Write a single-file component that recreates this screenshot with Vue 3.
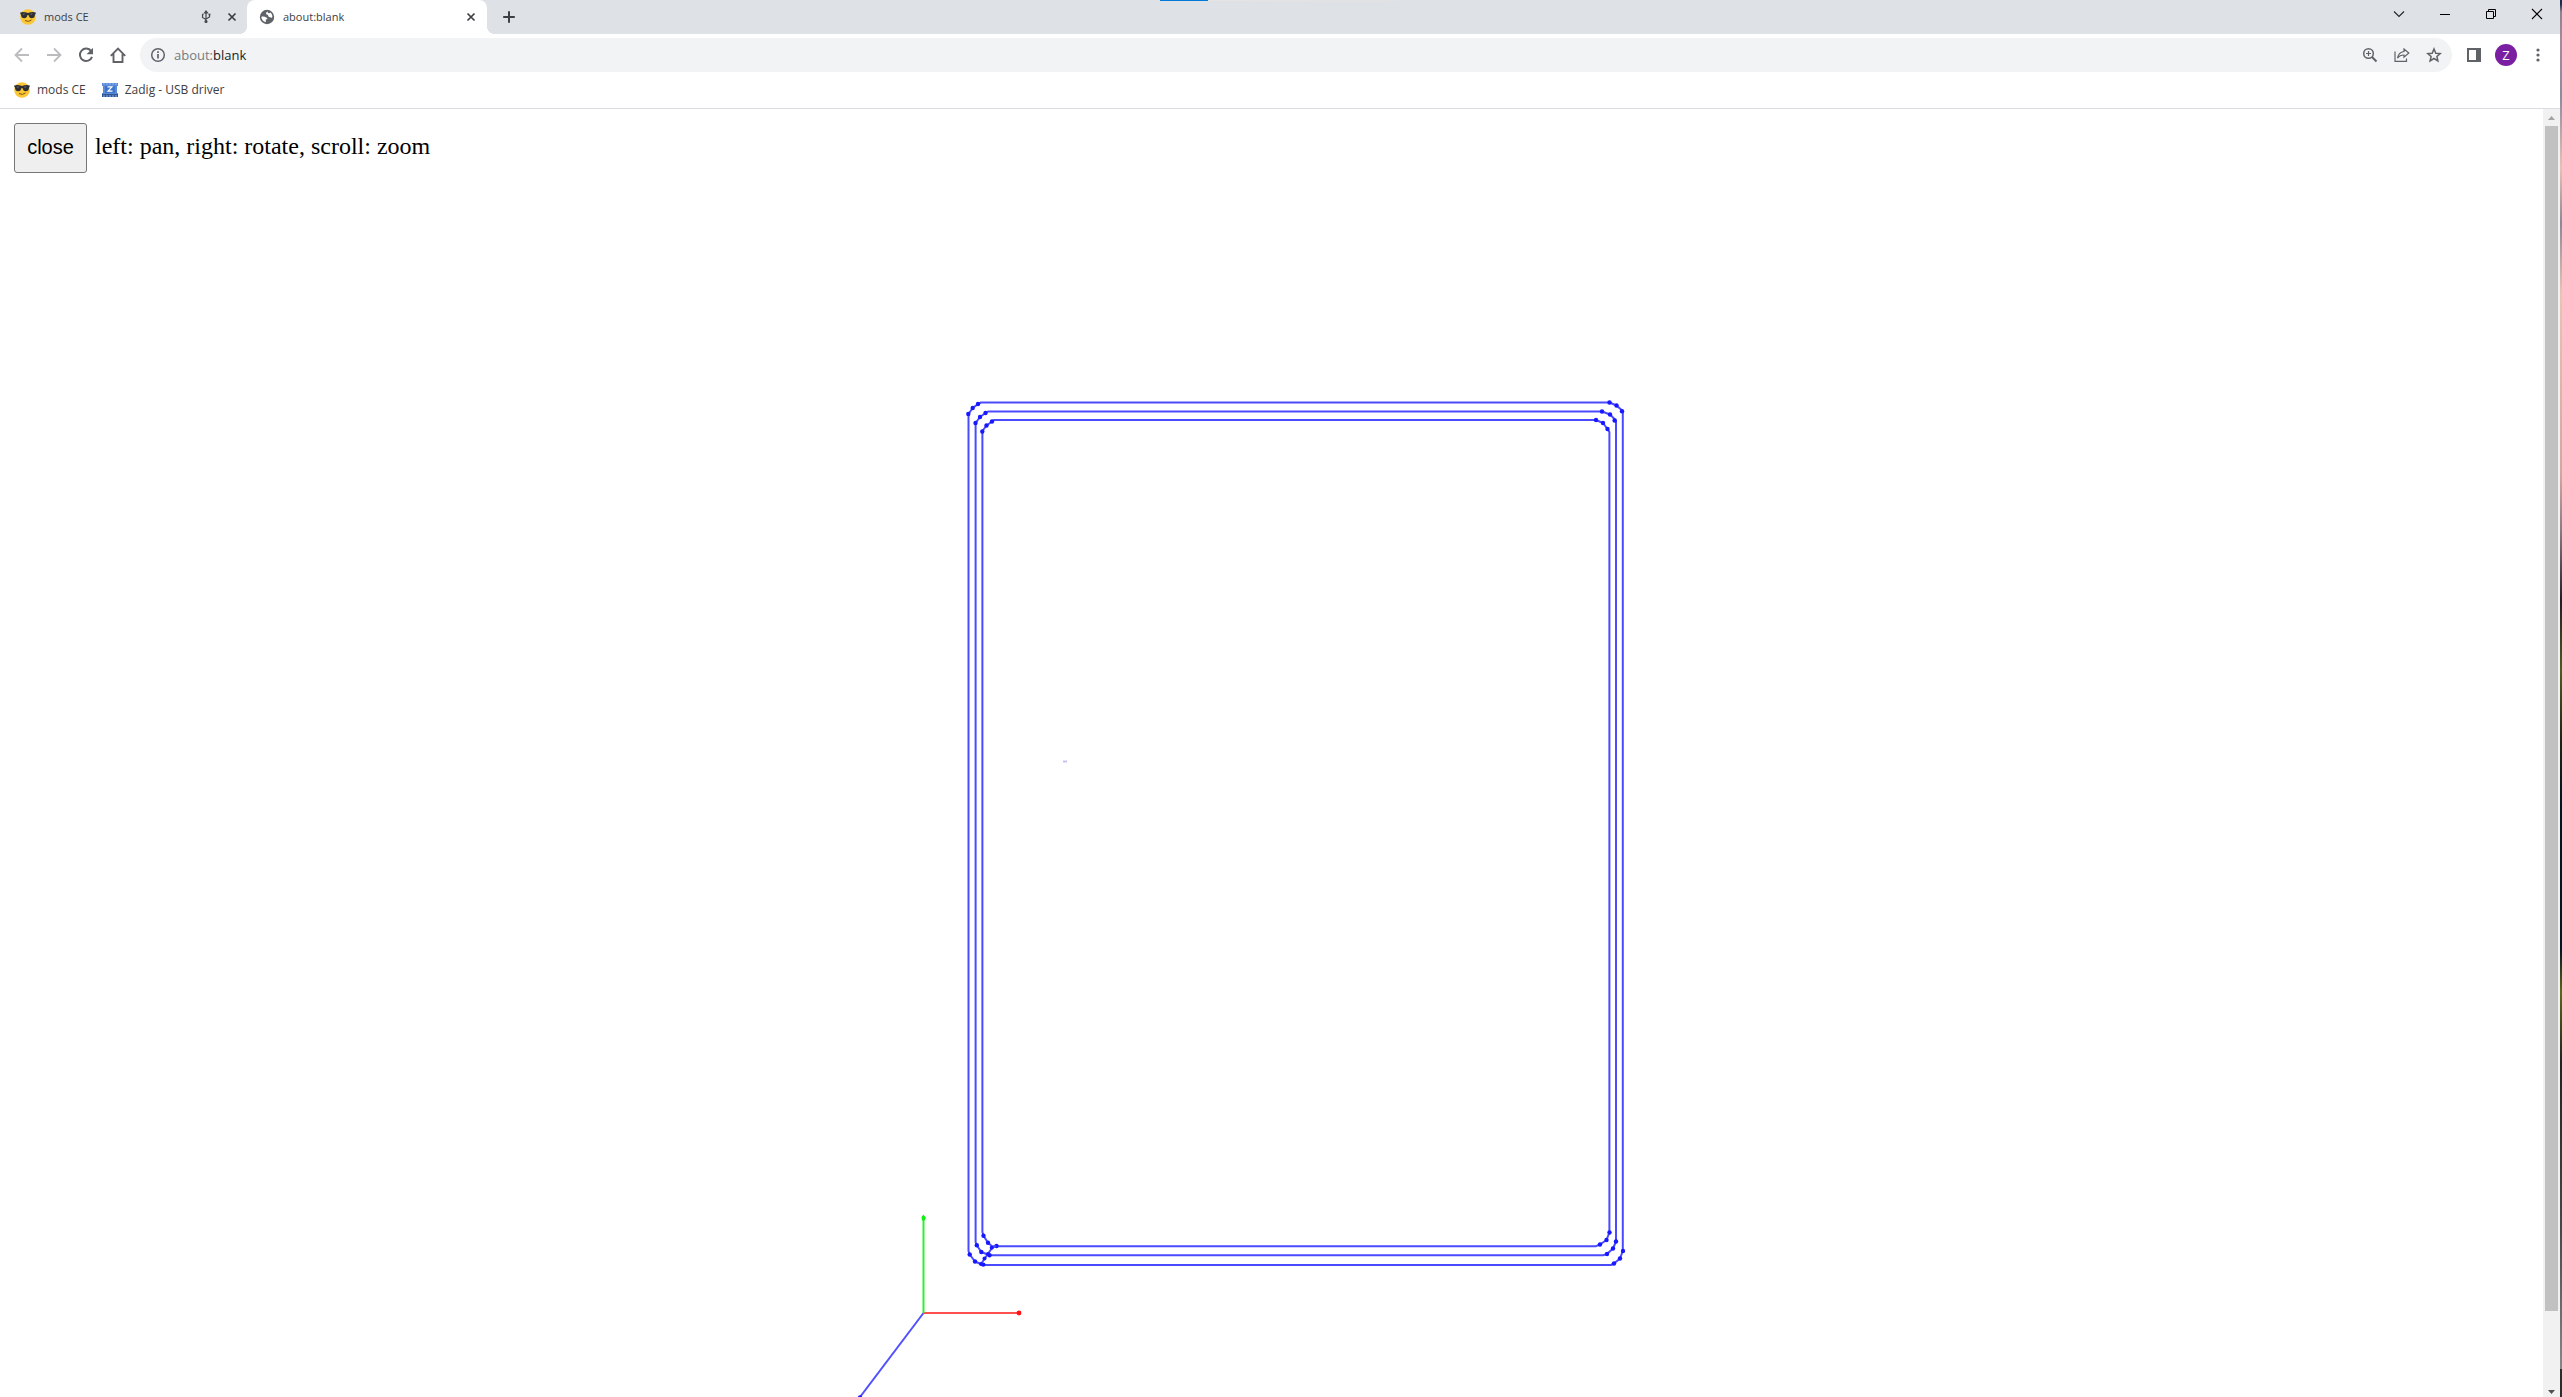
<script setup>
const loops = [
  {
    line: 'M968.5 414V1251L969.7 1254.5L975 1261.5L983 1265H1611L1614 1263.5L1620 1258.5L1622.8 1251V411L1616.5 405.5L1609.5 402.5H981L978 404L972.7 408Z',
    nodes: [[968.3, 414], [972.7, 408], [978, 404], [1609.5, 402.5], [1616.5, 405.5], [1622, 411.3], [969.7, 1254.5], [975, 1261.5], [983.3, 1264.6], [1623, 1251], [1620, 1258.5], [1614, 1263.5]],
  },
  {
    line: 'M975.6 423V1242L976.8 1245.3L981.3 1252L989.5 1255.2H1603L1607 1254L1613 1248.5L1616 1241.5V420.5L1610 414.5L1602 411.5H988L985.5 413L980 417Z',
    nodes: [[975.5, 423], [980, 417], [985.5, 413], [1602, 411.5], [1610, 414.5], [1614.6, 420.5], [976.8, 1245.3], [981.3, 1252], [989.5, 1255.2], [1616, 1241.5], [1613, 1248.5], [1607, 1254]],
  },
  {
    line: 'M982.4 431V1232L983.5 1235.7L988 1242.7L992 1246.2H1596L1600 1244.5L1606.5 1240L1609.4 1232.5V432L1607.5 429L1603 423L1596 420H994L992 421.5L986.5 425.5Z',
    nodes: [[982.3, 431.5], [986.5, 425.5], [992, 421.5], [1596, 420], [1603, 423], [1607.5, 429], [983.5, 1235.7], [988, 1242.7], [996.5, 1246], [1609.5, 1232.5], [1606.5, 1240], [1600, 1244.5]],
  },
]
const linkNodes = [[981, 1264], [984.5, 1258.5], [988, 1254], [991.7, 1247.7]]
const tabs = [
  { title: 'mods CE', icon: 'shades', usb: true, active: false },
  { title: 'about:blank', icon: 'globe', usb: false, active: true },
]
const bookmarks = [
  { title: 'mods CE', icon: 'shades' },
  { title: 'Zadig - USB driver', icon: 'zadig' },
]
</script>

<template>
  <div class="screen">
    <div class="browser">
      <header class="tabstrip">
        <div class="tabs">
          <div v-for="t in tabs" :key="t.title" class="tab" :class="{ active: t.active }">
            <svg v-if="t.icon === 'shades'" class="i16" viewBox="0 0 16 16"><circle cx="8" cy="8" r="7.8" fill="#fcc735" /><path d="M.3 3.4Q4 2.6 8 4Q12 2.6 15.7 3.4V5L15 5.4C15 8 13.5 9.2 11.7 9.2C9.6 9.2 8.9 7.8 8.5 5.9H7.5C7.1 7.8 6.4 9.2 4.3 9.2C2.5 9.2 1 8 1 5.4L.3 5Z" fill="#2f2f33" /><path d="M2.5 4.8L5.5 4.6L3.5 6Z M10 4.8L13 4.6L11 6Z" fill="#6b6f78" /><path d="M5 11.5Q8.5 13.5 11.5 11" fill="none" stroke="#7a5218" stroke-width="1" /></svg>
            <svg v-else class="i16" viewBox="0 0 16 16"><circle cx="8" cy="8" r="7.2" fill="#5f6368" /><path d="M2.3 7.8C4.4 7.4 6 7.4 7 8.4C8.4 8.4 8.6 9.4 8 10.2L6.8 10.6V13.2C4.2 12.6 2.3 10.4 2.3 7.8Z" fill="#fff" /><path d="M8.8 2.6C7.6 3 6.6 4.2 7.2 5.2C8.2 5.8 9.2 5.6 9.3 7C9.6 8.2 10.8 8 11.8 8.4C12.6 8.8 13 8.8 13.4 8C13.4 6 12.6 4.4 11.2 3.6C10.6 4.6 9.4 4.4 8.8 3.8Z" fill="#fff" /></svg>
            <span class="title">{{ t.title }}</span>
            <svg v-if="t.usb" class="usb" viewBox="0 0 12 14" fill="none" stroke="#45484c" stroke-width="1.2"><path d="M6 2V12M2.5 5V7.5L6 9.5M9.5 5V7L6 9" /><path d="M4.5 3L6 1L7.5 3Z" fill="#45484c" /><circle cx="6" cy="11.5" r="1" fill="#45484c" /><path d="M2 4.5H3.5M8.5 4.5H10.5" stroke-width="1.5" /></svg>
            <button class="plain close" aria-label="Close tab"><svg viewBox="0 0 16 16" class="i16"><path d="M4.5 4.5L11.5 11.5M11.5 4.5L4.5 11.5" stroke="#3c4043" stroke-width="1.7" /></svg></button>
          </div>
          <button class="plain newtab" aria-label="New tab"><svg viewBox="0 0 16 16" class="i16"><path d="M8 2.2V13.8M2.2 8H13.8" stroke="#3c4043" stroke-width="2" /></svg></button>
        </div>
        <div class="winctl">
          <button class="plain" aria-label="Search tabs"><svg viewBox="0 0 12 12"><path d="M1 3.5L6 8.5L11 3.5" fill="none" stroke="#222" stroke-width="1.1" /></svg></button>
          <button class="plain" aria-label="Minimize"><svg viewBox="0 0 12 12"><path d="M1 6.5H11" stroke="#000" /></svg></button>
          <button class="plain" aria-label="Restore"><svg viewBox="0 0 12 12" fill="none" stroke="#000"><path d="M1.5 3.5H8.5V10.5H1.5ZM3.5 3.5V1.5H10.5V8.5H8.5" /></svg></button>
          <button class="plain" aria-label="Close window"><svg viewBox="0 0 12 12"><path d="M1 1L11 11M11 1L1 11" stroke="#000" stroke-width="1.1" /></svg></button>
        </div>
        <div class="edge"></div>
      </header>

      <nav class="toolbar">
        <button class="plain nav" aria-label="Back"><svg viewBox="0 0 16 16" class="i16"><path d="M15 8H2M8 1.5L1.5 8L8 14.5" fill="none" stroke="#babcbe" stroke-width="1.8" /></svg></button>
        <button class="plain nav" aria-label="Forward"><svg viewBox="0 0 16 16" class="i16"><path d="M1 8H14M8 1.5L14.5 8L8 14.5" fill="none" stroke="#babcbe" stroke-width="1.8" /></svg></button>
        <button class="plain nav" aria-label="Reload"><svg viewBox="0 0 16 16" class="i16"><path d="M13.2 4.2A6.2 6.2 0 1 0 14 9.8" fill="none" stroke="#5f6368" stroke-width="2" /><path d="M15 .8V7.2H8.6Z" fill="#5f6368" /></svg></button>
        <button class="plain nav" aria-label="Home"><svg viewBox="0 0 16 16" class="i16"><path d="M3.5 7V15H12.5V7M.8 8.8L8 1.6L15.2 8.8" fill="none" stroke="#5f6368" stroke-width="1.9" /></svg></button>
        <div class="omnibox">
          <svg viewBox="0 0 16 16" class="i16"><circle cx="8" cy="8" r="6.3" fill="none" stroke="#5f6368" stroke-width="1.5" /><path d="M8 7V11.5M8 4.3V5.9" stroke="#5f6368" stroke-width="1.7" /></svg>
          <a class="url" href="about:blank"><span>about:</span>blank</a>
          <div class="actions">
            <button class="plain nav" aria-label="Zoom"><svg viewBox="0 0 16 16" class="i16"><g fill="none" stroke="#5f6368" stroke-width="1.5"><circle cx="6.5" cy="6.5" r="4.8" /><path d="M10 10L14.5 14.5" stroke-width="2" /><path d="M4 6.5H9M6.5 4V9" stroke-width="1.2" /></g></svg></button>
            <button class="plain nav" aria-label="Share"><svg viewBox="0 0 16 16" class="i16" fill="none" stroke="#5f6368" stroke-width="1.2"><path d="M1 4.5V14.3H12.5V11.5" /><path d="M10 2L14.8 6L10 10.2V8C7 8 5 9 3.5 11.2C4 7.5 6.5 5 10 4.5Z" /></svg></button>
            <button class="plain nav" aria-label="Bookmark"><svg viewBox="0 0 16 16" class="i16"><path d="M8 2L9.8 6.2L14.2 6.6L10.9 9.5L11.9 13.9L8 11.5L4.1 13.9L5.1 9.5L1.8 6.6L6.2 6.2Z" fill="none" stroke="#5f6368" stroke-width="1.5" /></svg></button>
          </div>
        </div>
        <button class="plain nav" aria-label="Side panel"><svg viewBox="0 0 16 16" class="i16"><path d="M1 1H15V15H1ZM3 3V13H10V3Z" fill="#5f6368" fill-rule="evenodd" /></svg></button>
        <button class="plain nav" aria-label="Profile"><span class="avatar">Z</span></button>
        <button class="plain nav" aria-label="Menu"><svg viewBox="0 0 16 16" class="i16" fill="#5f6368"><circle cx="8" cy="3" r="1.6" /><circle cx="8" cy="8" r="1.6" /><circle cx="8" cy="13" r="1.6" /></svg></button>
      </nav>

      <div class="bookmarks">
        <a v-for="b in bookmarks" :key="b.title" href="#">
          <svg v-if="b.icon === 'shades'" class="i16" viewBox="0 0 16 16"><circle cx="8" cy="8" r="7.8" fill="#fcc735" /><path d="M.3 3.4Q4 2.6 8 4Q12 2.6 15.7 3.4V5L15 5.4C15 8 13.5 9.2 11.7 9.2C9.6 9.2 8.9 7.8 8.5 5.9H7.5C7.1 7.8 6.4 9.2 4.3 9.2C2.5 9.2 1 8 1 5.4L.3 5Z" fill="#2f2f33" /><path d="M2.5 4.8L5.5 4.6L3.5 6Z M10 4.8L13 4.6L11 6Z" fill="#6b6f78" /><path d="M5 11.5Q8.5 13.5 11.5 11" fill="none" stroke="#7a5218" /></svg>
          <svg v-else class="i16" viewBox="0 0 16 16"><path d="M0 1H16V4H15V11H16V15H0V11H1V4H0Z" fill="#5b8ad8" /><path d="M0 12H16V15H0Z" fill="#2f5597" /><path d="M2 1V3M5 1V3M8 1V3M11 1V3M14 1V3M2 13V15M5 13V15M8 13V15M11 13V15M14 13V15" stroke="#8fb4ee" /><path d="M3 4H13V11H3Z" fill="#3f74cc" /><path d="M5.5 4.8H10L6 9.2H10.5" fill="none" stroke="#fff" stroke-width="1.2" /></svg>
          <span>{{ b.title }}</span>
        </a>
      </div>

      <div class="page">
        <main class="view">
          <svg class="toolpath" viewBox="0 109 2543 1288" preserveAspectRatio="xMidYMin meet" fill="none" stroke-width="2">
            <g v-for="(l, i) in loops" :key="i">
              <path :d="l.line" stroke="#4a4aff" stroke-linejoin="round" />
              <circle v-for="(n, j) in l.nodes" :key="j" :cx="n[0]" :cy="n[1]" r="2.2" fill="#1818ff" />
            </g>
            <path d="M981 1264L992 1248L996 1246" stroke="#4a4aff" />
            <circle v-for="(n, j) in linkNodes" :key="j" :cx="n[0]" :cy="n[1]" r="2" fill="#1818ff" />
            <path d="M923.5 1313L860 1397" stroke="#5050ff" />
            <circle cx="860" cy="1397.5" r="2.2" fill="#1818ff" />
            <path d="M923.5 1313H1019" stroke="#ff5050" />
            <circle cx="1019" cy="1313" r="2.4" fill="#ff1414" />
            <path d="M923.5 1313V1218" stroke="#30f030" />
            <path d="M923.5 1214.5L926 1218L924.5 1220.5H922L921.5 1217Z" fill="#10f010" />
            <path d="M1063 761.5H1067" stroke="#c4c4fa" stroke-width="2" />
          </svg>
          <div class="controls">
            <button class="closebtn">close</button>
            <span class="hint">left: pan, right: rotate, scroll: zoom</span>
          </div>
        </main>
        <div class="scrollbar">
          <svg viewBox="0 0 17 17"><path d="M5 11L8.5 7L12 11Z" fill="#a3a3a3" /></svg>
          <div class="track"><div class="thumb"></div></div>
          <svg viewBox="0 0 17 17"><path d="M5 10L8.5 14L12 10Z" fill="#505050" /></svg>
        </div>
      </div>
    </div>
    <div class="desktop"></div>
  </div>
</template>

<style>
body { margin: 0; }
</style>

<style scoped>
* { box-sizing: border-box; }
svg { display: block; flex: none; }
.i16 { width: 16px; height: 16px; }
.screen { display: flex; min-height: 100vh; font: 12px/16px "Open Sans", "Noto Sans", sans-serif; color: #3c4043; background: #fff; }
.browser { flex: 1; min-width: 0; display: flex; flex-direction: column; }
.desktop { width: 2px; background: linear-gradient(#1c2c4c 0, #1c2c4c 4px, #8b8390 12px, #a8889a 3%, #8c8ba0 7%, #e5c2b4 12%, #8d8794 16%, #e6c5b4 21%, #d2a6a0 34%, #8a7a82 38%, #241c24 43%, #4e5b20 48%, #1c2415 53%, #001420 58%, #061620 68%, #5c661c 71%, #202420 76%, #454848 88%, #858789 98%, #2c2c2c 98%); }
.plain { border: 0; padding: 0; background: none; display: flex; align-items: center; justify-content: center; }

.tabstrip { position: relative; display: flex; justify-content: space-between; height: 34px; background: #dee1e6; }
.tabs { display: flex; padding-left: 8px; }
.tab { position: relative; display: flex; align-items: center; gap: 8px; width: 240px; padding: 0 8px 0 12px; }
.tab.active { background: #fff; border-radius: 8px 8px 0 0; margin-left: -1px; }
.tab.active::before, .tab.active::after { content: ""; position: absolute; bottom: 0; width: 8px; height: 8px; }
.tab.active::before { left: -8px; background: radial-gradient(circle at 0 0, transparent 8px, #fff 8px); }
.tab.active::after { right: -8px; background: radial-gradient(circle at 100% 0, transparent 8px, #fff 8px); }
.title { flex: 1; font-size: 11px; white-space: nowrap; }
.usb { width: 12px; height: 14px; margin-right: 4px; }
.newtab { width: 28px; margin-left: 8px; }
.winctl { display: flex; height: 28px; }
.winctl button { width: 46px; }
.winctl svg { width: 12px; height: 12px; }
.edge { position: absolute; top: 0; left: 1160px; width: 240px; height: 1px; background: linear-gradient(90deg, #0078d7 48px, #e6e3e1 48px, #e2e2e4); }

.toolbar { display: flex; align-items: center; height: 42px; padding: 0 6px; }
.nav { width: 32px; height: 32px; }
.omnibox { flex: 1; display: flex; align-items: center; gap: 8px; height: 34px; margin: 0 6px; padding: 0 2px 0 10px; border-radius: 17px; background: #f1f3f4; }
.url { flex: 1; font-size: 13px; line-height: 20px; color: #202124; text-decoration: none; }
.url span { color: #777b80; }
.actions { display: flex; }
.avatar { width: 22px; height: 22px; border-radius: 50%; background: #7b1fa2; color: #fff; font: 13px/22px "Open Sans", sans-serif; text-align: center; }

.bookmarks { display: flex; align-items: center; gap: 16px; height: 33px; padding: 0 14px 4px; border-bottom: 1px solid #dadce0; }
.bookmarks a { display: flex; align-items: center; gap: 7px; color: inherit; text-decoration: none; }

.page { flex: 1; display: flex; }
.view { position: relative; flex: 1; overflow: hidden; }
.toolpath { position: absolute; top: 0; left: 0; width: 100%; }
.controls { position: relative; display: flex; align-items: center; gap: 8px; padding: 14px; font: 24px/28px "Liberation Serif", serif; color: #000; }
.hint { padding-bottom: 4px; }
.closebtn { width: 73px; height: 50px; padding: 0 0 2px; border: 1px solid #767676; border-radius: 3px; background: #efefef; color: #000; font: 20px/24px "Liberation Sans", sans-serif; }
.scrollbar { display: flex; flex-direction: column; width: 17px; background: #f1f1f1; }
.scrollbar svg { width: 17px; height: 17px; }
.track { flex: 1; display: flex; flex-direction: column; padding: 0 2px; }
.track::after { content: ""; flex: 55; }
.thumb { flex: 945; background: #c1c1c1; }
</style>
